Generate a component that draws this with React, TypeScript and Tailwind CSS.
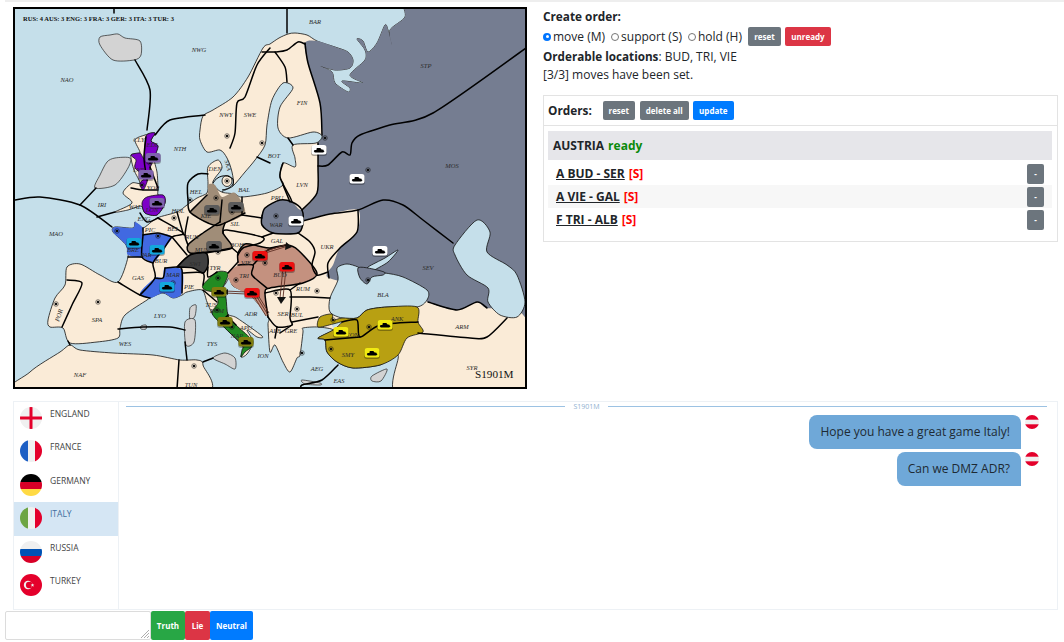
import React from "react";

const CREAM = "#faebd7";
const SEA = "#c5dfea";
const GRAY = "#757d91";
const ISLE = "#d3d3d3";
type P = number[][];

function smooth(p: P, closed: boolean) {
  const n = p.length;
  const at = (i: number) => (closed ? p[(i + n) % n] : p[Math.max(0, Math.min(n - 1, i))]);
  let d = `M${p[0][0]} ${p[0][1]}`;
  const last = closed ? n : n - 1;
  for (let i = 0; i < last; i++) {
    const a = at(i - 1), b = at(i), c = at(i + 1), e = at(i + 2);
    const k = 0.14;
    d += `C${(b[0] + (c[0] - a[0]) * k).toFixed(1)} ${(b[1] + (c[1] - a[1]) * k).toFixed(1)} ${(c[0] - (e[0] - b[0]) * k).toFixed(1)} ${(c[1] - (e[1] - b[1]) * k).toFixed(1)} ${c[0]} ${c[1]}`;
  }
  return closed ? d + "Z" : d;
}
const poly = (p: P) => smooth(p, true);
const line = (p: P) => smooth(p, false);

const land: P = [[203,116],[213,110],[233,97],[248,77],[263,48],[270,44],[279,38],[288,34],[295,33],[307,35],[317,41],[335,47],[348,52],[353,60],[350,68],[335,70],[320,66],[332,72],[335,83],[348,92],[350,88],[342,81],[363,83],[350,75],[365,60],[365,50],[357,39],[363,41],[368,52],[377,43],[385,25],[388,30],[392,45],[390,30],[405,17],[402,2],[402,-10],[545,-10],[545,400],[402,400],[398,355],[380,365],[353,368],[337,362],[327,352],[325,340],[318,338],[333,330],[318,327],[303,328],[303,332],[300,355],[297,358],[290,372],[283,362],[275,345],[270,352],[268,325],[268,317],[250,295],[233,286],[230,277],[226,283],[223,290],[227,313],[237,318],[262,336],[257,337],[247,330],[253,342],[247,354],[241,357],[243,347],[230,333],[220,323],[212,313],[207,302],[202,290],[187,292],[182,295],[173,298],[163,293],[150,298],[147,300],[125,315],[120,328],[118,338],[97,342],[70,343],[63,328],[50,327],[48,320],[55,298],[65,285],[67,267],[80,264],[100,275],[118,282],[128,257],[126,245],[113,232],[115,227],[133,228],[135,222],[143,228],[157,218],[177,212],[187,205],[197,198],[207,193],[208,183],[208,167],[218,160],[222,168],[215,178],[213,184],[222,192],[233,186],[232,172],[227,158],[220,150],[207,152],[200,140],[200,130]];
const baltic: P = [[222,192],[233,186],[245,172],[255,160],[265,145],[267,125],[272,100],[283,83],[293,88],[280,107],[278,128],[288,138],[313,132],[322,136],[316,143],[293,145],[295,158],[295,167],[283,163],[280,177],[283,185],[267,193],[242,197],[235,194]];
const russia: P = [[305,43],[317,41],[335,47],[348,52],[353,60],[350,68],[335,70],[320,66],[332,72],[335,83],[348,92],[350,88],[342,81],[363,83],[350,75],[365,60],[365,50],[357,39],[363,41],[368,52],[377,43],[385,25],[388,30],[392,45],[390,30],[405,17],[402,2],[402,-10],[545,-10],[545,308],[515,308],[487,308],[477,302],[457,310],[428,302],[400,285],[360,285],[329,278],[328,272],[333,265],[340,248],[357,232],[358,210],[330,214],[305,220],[303,223],[298,233],[273,233],[262,225],[262,215],[265,208],[280,200],[292,202],[302,210],[317,193],[318,167],[318,143],[322,135],[320,103],[308,63]];
const black: P = [[338,280],[337,268],[347,264],[358,267],[365,272],[368,267],[385,258],[398,250],[388,262],[372,272],[385,273],[403,277],[427,290],[427,300],[417,307],[387,307],[367,310],[357,318],[342,318],[330,312],[330,298]];
const crimea: P = [[358,268],[368,268],[384,272],[383,275],[372,277],[367,284],[360,278]];
const caspian: P = [[455,245],[477,220],[490,232],[487,252],[507,265],[517,275],[525,302],[517,317],[500,315],[488,302],[488,288],[467,275],[455,255]];
const turkey: P = [[318,327],[320,317],[332,314],[333,320],[342,318],[357,318],[367,310],[387,307],[417,307],[418,322],[423,332],[407,338],[398,355],[380,365],[353,368],[337,362],[327,352],[325,340],[318,338],[333,330],[342,322],[333,324]];
const africa: P = [[14,396],[30,372],[60,352],[70,345],[80,350],[113,353],[153,355],[180,360],[197,360],[203,365],[200,396]];
const uk: P = [[145,135],[155,133],[151,141],[158,146],[154,158],[157,172],[158,188],[158,195],[163,196],[165,203],[157,215],[145,213],[141,206],[128,210],[115,212],[132,203],[123,193],[132,183],[140,183],[134,170],[131,155],[140,153],[135,140]];
const purple: P[] = [[[146,136],[155,133],[151,141],[158,146],[154,158],[150,168],[147,182],[143,190],[140,183],[145,177],[135,168],[136,160],[131,155],[140,153],[144,158]],[[142,203],[147,197],[163,195],[165,203],[157,215],[145,213]]];
const isles: P[] = [
  [[100,37],[110,35],[118,34],[125,38],[140,41],[141,55],[134,60],[113,60],[100,45]],
  [[95,188],[100,175],[107,162],[115,158],[130,158],[128,168],[115,185]],
  [[190,308],[196,305],[195,316],[190,320]],
  [[185,322],[195,320],[194,342],[186,345]],
  [[213,358],[225,353],[235,358],[235,369],[225,364]],
  [[141,326],[146,325],[146,329],[141,329]],
  [[372,376],[387,369],[381,381],[372,381]],
  [[302,380],[320,383],[320,385],[305,384]],
];
const brownA: P[] = [
  [[190,212],[207,195],[208,185],[215,185],[222,197],[235,193],[245,213],[220,225],[208,223]],
  [[220,222],[203,233],[188,245],[190,253],[207,252],[232,248],[223,233],[225,223]],
];
const franceA: P[] = [
  [[115,227],[133,228],[135,222],[143,228],[143,235],[158,233],[172,237],[163,250],[153,263],[143,258],[128,255],[126,245],[113,232]],
  [[165,268],[182,270],[182,293],[173,298],[163,293],[150,298],[140,293],[155,278],[163,278]],
];
const swiss: P = [[177,267],[190,255],[206,253],[208,265],[203,273],[193,268]];
const italyA: P = [[203,285],[217,272],[228,273],[225,283],[223,288],[226,298],[228,315],[236,325],[250,338],[252,346],[245,352],[241,357],[242,350],[243,345],[230,333],[220,323],[212,313],[218,303],[216,295],[213,292],[205,290]];
const austria: P = [[238,262],[238,253],[245,244],[258,246],[270,248],[287,245],[298,250],[317,273],[303,283],[270,288],[265,293],[268,317],[252,297],[233,286],[228,273],[238,265]];

const borders: P[] = [
  [[114,7],[114,13]],[[287,8],[287,33]],[[135,60],[150,90],[147,130]],[[155,135],[170,120],[205,115]],
  [[270,48],[257,65],[245,97],[237,103],[235,133],[230,148]],[[262,52],[275,52],[287,50],[298,42],[305,44]],[[275,52],[285,67],[287,82]],
  [[257,157],[270,163]],[[293,145],[288,138]],[[305,43],[308,63],[320,103],[322,135]],[[318,143],[318,167],[317,193],[302,210]],
  [[526,48],[433,113],[390,125],[360,135],[352,143],[350,155],[342,152],[328,165],[318,166]],
  [[283,163],[280,177],[290,197],[292,202]],[[283,185],[290,202]],[[242,197],[242,215]],[[262,217],[265,208],[280,200],[292,202],[302,210],[303,223],[298,233],[273,233],[262,225],[262,215]],[[242,215],[262,218]],
  [[303,221],[330,214],[358,210],[383,200],[403,205],[423,220],[453,243]],
  [[358,210],[357,232],[340,248],[328,263],[329,278]],[[298,233],[310,242],[315,252],[312,265],[317,275],[328,272]],
  [[222,200],[220,222]],[[245,213],[220,225],[208,223],[190,212],[188,200],[188,183],[198,174],[208,174]],[[207,195],[190,212]],
  [[220,222],[203,233],[188,245],[190,253],[207,252],[232,248],[223,233],[225,223]],[[188,245],[185,235],[188,217]],
  [[223,233],[227,230],[262,237],[260,243],[243,248],[238,255]],[[232,248],[238,253]],[[262,237],[273,233]],
  [[158,218],[183,233],[172,237],[163,250],[153,263],[155,278],[140,295]],[[177,212],[183,233],[185,235]],[[143,228],[143,235],[142,257],[153,263]],[[143,235],[158,233],[172,237]],
  [[128,257],[142,257]],[[118,282],[140,295],[150,298]],[[165,268],[163,278],[155,278]],[[172,237],[187,255]],[[165,268],[177,267],[182,270],[182,293]],
  [[177,267],[190,255],[206,253],[208,265],[203,273],[193,268],[177,267]],[[208,267],[208,277],[217,272]],[[206,253],[232,248]],[[183,273],[203,273],[203,285]],
  [[238,262],[238,253],[245,244],[258,246],[270,248],[287,245],[298,250],[317,273],[303,283],[270,288],[265,293],[268,317]],[[238,262],[228,273]],
  [[238,265],[253,265],[252,275],[267,288]],[[253,265],[268,250],[287,245]],
  [[265,293],[290,290],[290,318],[292,325],[277,327],[268,317]],[[290,297],[310,297],[330,298]],[[292,322],[318,317]],[[277,327],[275,338]],[[292,325],[280,333]],[[290,290],[300,283]],
  [[203,290],[217,302]],[[225,318],[228,315]],[[228,317],[236,325]],
  [[67,280],[82,283],[72,305],[62,327]],[[179,360],[177,389]],[[70,345],[68,341]],[[118,329],[143,327],[170,327],[185,330]],[[185,342],[187,360]],[[203,362],[213,358]],
  [[96,188],[80,205]],[[97,217],[115,212]],[[15,200],[40,197],[80,205],[112,227]],[[140,213],[147,222],[158,218]],[[158,188],[150,167]],
  [[302,389],[302,385],[322,380],[338,365]],[[146,137],[144,158],[147,180]],[[131,188],[143,190],[158,190]],
  [[418,333],[470,338],[487,337],[507,318]],[[428,302],[457,310],[477,302],[487,308]],[[342,322],[357,320],[360,337],[380,325],[418,322]],[[325,340],[360,337]],
];

const centres: P = [[227,136],[262,143],[150,163],[142,185],[227,181],[216,198],[325,138],[368,170],[276,216],[317,291],[297,309],[276,293],[368,280],[333,320],[369,327],[331,349],[302,353],[56,304],[98,302],[194,366],[232,327],[217,310],[218,278],[236,280],[247,255],[265,263],[158,236],[117,231],[174,218],[190,200],[232,212],[218,252],[173,283]];

const labels: [string, number, number][] = [["NAO",67,82],["NWG",199,52],["BAR",315,24],["STP",426,68],["NWY",226,117],["SWE",250,117],["FIN",302,105],["BOT",274,158],["BAL",244,192],["NTH",180,151],["DEN",215,171],["HEL",196,194],["LVN",302,187],["PRU",277,200],["MOS",452,168],["WAR",276,227],["UKR",327,249],["SEV",428,270],["GAL",277,243],["SIL",235,226],["BOH",237,247],["MUN",202,252],["KIE",206,218],["BER",237,210],["RUH",192,239],["HOL",178,213],["BEL",173,231],["PIC",150,232],["ENG",144,221],["IRI",102,207],["WAL",135,209],["LON",152,212],["YOR",153,190],["LVP",139,172],["EDI",152,147],["CLY",139,142],["MAO",56,236],["BRE",133,252],["PAR",146,257],["BUR",161,263],["GAS",138,280],["MAR",173,277],["SWI",195,266],["TYR",215,270],["PIE",189,289],["TUS",211,307],["ROM",217,313],["APU",246,330],["VIE",246,265],["TRI",244,278],["BUD",280,277],["RUM",303,291],["SER",283,316],["BUL",297,317],["ALB",275,333],["GRE",291,333],["ADR",251,316],["ION",263,358],["AEG",317,371],["EAS",339,383],["LYO",160,318],["WES",125,346],["TYS",212,346],["SPA",97,322],["NAF",80,377],["TUN",191,387],["BLA",383,297],["ANK",397,321],["ARM",462,329],["CON",352,337],["SMY",348,357],["SYR",472,370],["NAP",237,338]];

const units: [number, number, string][] = [
  [153,158,"#7e62ad"],[146,175,"#7e62ad"],[157,203,"#7e62ad"],
  [134,243,"#13a7dc"],[157,250,"#13a7dc"],[167,287,"#13a7dc"],
  [212,210,"#5b5b5b"],[236,207,"#5b5b5b"],[214,246,"#5b5b5b"],
  [219,292,"#7f7d10"],[225,322,"#7f7d10"],[246,342,"#7f7d10"],
  [260,256,"#ee0f10"],[252,293,"#ee0f10"],[287,267,"#ee0f10"],
  [319,150,"#ffffff"],[357,179,"#ffffff"],[296,221,"#ffffff"],[380,251,"#ffffff"],
  [341,332,"#f1ea12"],[385,325,"#f1ea12"],[372,353,"#f1ea12"],
];

function Unit({ x, y, c }: { x: number; y: number; c: string }) {
  return (
    <g transform={`translate(${x} ${y})`}>
      <rect x={-8} y={-4.5} width={16} height={10.5} rx={3} fill="#000" opacity={0.3} />
      <rect x={-7.5} y={-5} width={15} height={9.5} rx={2.5} fill={c} />
      <path d="M-5.2 1.2L-4.4 0L-2.6 0L-2.2 -2L1.4 -2L2.2 -0.7L5 -0.7L2.2 0L4.2 0L5.5 1.2L4.2 2.6L-4.2 2.6Z" fill="#000" />
    </g>
  );
}

function MapSvg() {
  const coast = { stroke: "#111", strokeWidth: 0.8 };
  return (
    <svg viewBox="15 9 510 378" className="block h-full w-full">
      <rect x={13} y={7} width={514} height={382} fill={SEA} />
      <path d={poly(land)} fill={CREAM} {...coast} />
      <path d={poly(uk)} fill={CREAM} {...coast} />
      <path d={poly(africa)} fill={CREAM} {...coast} />
      <path d={poly(russia)} fill={GRAY} />
      <path d={poly(baltic)} fill={SEA} {...coast} />
      <path d={poly(black)} fill={SEA} {...coast} />
      <path d={poly(crimea)} fill={GRAY} {...coast} />
      <path d={poly(caspian)} fill={SEA} {...coast} />
      <path d="M331 322L342 318L344 322L333 328Z" fill={SEA} />
      <ellipse cx={227} cy={181} rx={5} ry={5.5} fill={CREAM} {...coast} />
      <path d="M213 183C217 176 226 173 233 179C235 185 230 189 222 190" fill="none" stroke="#000" strokeWidth={1} />
      {isles.map((p, i) => <path key={i} d={poly(p)} fill={ISLE} stroke="#222" strokeWidth={0.7} />)}
      {purple.map((p, i) => <path key={i} d={poly(p)} fill="#7d00c8" {...coast} />)}
      {brownA.map((p, i) => <path key={i} d={poly(p)} fill="#a08d78" />)}
      {franceA.map((p, i) => <path key={i} d={poly(p)} fill="#4169e1" />)}
      <path d={poly(italyA)} fill="#228b22" {...coast} />
      <path d={poly(swiss)} fill="#404040" />
      <path d={poly(austria)} fill="#c4917f" />
      <path d={poly(turkey)} fill="#b8a012" {...coast} />
      {borders.map((p, i) => <path key={i} d={line(p)} fill="none" stroke="#000" strokeWidth={1.5} strokeLinejoin="round" strokeLinecap="round" />)}
      <g fontFamily="'Liberation Serif', serif" fontStyle="italic" fontSize={6.5} fill="#2c2c2c" textAnchor="middle">
        {labels.map(([t, x, y]) => <text key={t} x={x} y={y}>{t}</text>)}
        <text transform="translate(61 316) rotate(-72)">POR</text>
        <text transform="translate(226 166) rotate(75)" fontSize={6}>SKA</text>
      </g>
      {centres.map(([x, y], i) => (
        <g key={i}>
          <circle cx={x} cy={y} r={2.3} fill="none" stroke="#111" strokeWidth={0.5} />
          <circle cx={x} cy={y} r={1.3} fill="#111" />
        </g>
      ))}
      <g stroke="#5f2f24" strokeWidth={0.9} fill="none">
        <path d="M286 268L283 298M283 268L280 298" />
        <path d="M262 254L288 246M262 252L288 244" />
        <path d="M252 293L266 316M254 292L268 315M256 292L269 313" />
        <path d="M225 291L246 292M225 293L246 294" />
      </g>
      <path d="M277 297L286 297L281 304Z" fill="#111" />
      <path d="M286 242L292 247L285 250Z" fill="#111" />
      <path d="M228 289L223 292L228 295Z" fill="#111" />
      {units.map(([x, y, c], i) => <Unit key={i} x={x} y={y} c={c} />)}
      <text x={23} y={21} fontFamily="'Liberation Serif', serif" fontWeight={700} fontSize={6.5} fill="#111">RUS: 4 AUS: 3 ENG: 3 FRA: 3 GER: 3 ITA: 3 TUR: 3</text>
      <text x={475} y={378} fontFamily="'Liberation Serif', serif" fontSize={11.2} fill="#111">S1901M</text>
    </svg>
  );
}

function Flag({ kind }: { kind: string }) {
  const g: Record<string, React.ReactNode> = {
    england: <><rect width={22} height={22} fill="#f0f0f0" /><rect x={9.5} width={3} height={22} fill="#e4002b" /><rect y={9.5} width={22} height={3} fill="#e4002b" /></>,
    france: <><rect width={8} height={22} fill="#1d5fc4" /><rect x={8} width={7} height={22} fill="#f0f0f0" /><rect x={15} width={7} height={22} fill="#e4002b" /></>,
    germany: <><rect width={22} height={8} fill="#000" /><rect y={8} width={22} height={7} fill="#d80027" /><rect y={15} width={22} height={7} fill="#ffda44" /></>,
    italy: <><rect width={8} height={22} fill="#6da544" /><rect x={8} width={7} height={22} fill="#f0f0f0" /><rect x={15} width={7} height={22} fill="#e4002b" /></>,
    russia: <><rect width={22} height={8} fill="#f0f0f0" /><rect y={8} width={22} height={7} fill="#0052b4" /><rect y={15} width={22} height={7} fill="#d80027" /></>,
    turkey: <><rect width={22} height={22} fill="#e4002b" /><circle cx={8} cy={11} r={4.2} fill="#f0f0f0" /><circle cx={9.2} cy={11} r={3.3} fill="#e4002b" /><path d="M12.5 9.3l.5 1.2 1.3.1-1 .8.3 1.3-1.1-.7-1.1.7.3-1.3-1-.8 1.3-.1z" fill="#f0f0f0" /></>,
  };
  return (
    <svg viewBox="0 0 22 22" className="h-[22px] w-[22px] shrink-0 rounded-full">
      {g[kind]}
    </svg>
  );
}

function AustriaFlag() {
  return (
    <svg viewBox="0 0 14 14" className="h-[14px] w-[14px] shrink-0 rounded-full">
      <rect width={14} height={14} fill="#f0f0f0" />
      <rect width={14} height={4.7} fill="#e4002b" />
      <rect y={9.3} width={14} height={4.7} fill="#e4002b" />
    </svg>
  );
}

function Radio({ on, label }: { on?: boolean; label: string }) {
  return (
    <span className="flex items-center">
      {on ? (
        <span className="flex h-2 w-2 items-center justify-center rounded-full bg-[#0075ff]"><span className="h-[3px] w-[3px] rounded-full bg-white" /></span>
      ) : (
        <span className="h-2 w-2 rounded-full border border-[#767676] bg-white" />
      )}
      <span className="ml-[2px]">{label}</span>
    </span>
  );
}

function Btn({ className, children }: { className: string; children: React.ReactNode }) {
  return <button className={`flex items-center justify-center rounded-[2px] text-[8px] leading-none font-bold text-white ${className}`}>{children}</button>;
}

const orders = [["A BUD - SER", ""], ["A VIE - GAL", "bg-[#f7f7f7]"], ["F TRI - ALB", ""]];
const people = [["england", "ENGLAND"], ["france", "FRANCE"], ["germany", "GERMANY"], ["italy", "ITALY"], ["russia", "RUSSIA"], ["turkey", "TURKEY"]];

export default function App() {
  return (
    <div className="relative h-[642px] w-[1064px] overflow-hidden bg-white font-['Open_Sans',sans-serif] text-[12px] text-[#212529]">
      <div className="ml-[5px] h-[2px] bg-[#eeeeee]" />
      <div className="flex pt-[5px] pl-[13px]">
        <div className="h-[382px] w-[514px] border-2 border-black bg-[#c5dfea]">
          <MapSvg />
        </div>
        <div className="ml-[16px] flex w-[515px] flex-col">
          <div className="text-[11.8px] leading-[19px] font-bold">Create order:</div>
          <div className="mt-px flex h-[19px] items-center gap-[6px] leading-[19px]">
            <Radio on label="move (M)" />
            <Radio label="support (S)" />
            <Radio label="hold (H)" />
            <Btn className="h-[19px] w-[33px] bg-[#6c757d]">reset</Btn>
            <Btn className="-ml-[2px] h-[19px] w-[46px] bg-[#dc3545]">unready</Btn>
          </div>
          <div className="mt-px leading-[19px]"><b className="text-[11.7px]">Orderable locations</b>: BUD, TRI, VIE</div>
          <div className="-mt-px leading-[19px]">[3/3] moves have been set.</div>
          <div className="mt-[11px] h-[147px] border border-[#e3e3e3]">
            <div className="flex h-[30px] items-center border-b border-[#e3e3e3] pl-[4px]">
              <span className="text-[11.8px] font-bold">Orders:</span>
              <Btn className="ml-[11px] h-[19px] w-[32px] bg-[#6c757d]">reset</Btn>
              <Btn className="ml-[5px] h-[19px] w-[49px] bg-[#6c757d]">delete all</Btn>
              <Btn className="ml-[4px] h-[19px] w-[41px] bg-[#007bff]">update</Btn>
            </div>
            <div className="mx-[4px] mt-[5px] mb-[2px] flex h-[29px] w-[504px] items-center bg-[#e6e6ea] pl-[5px] text-[12px] font-bold">
              AUSTRIA<span className="ml-[4px] text-[#0a8a0a]">ready</span>
            </div>
            {orders.map(([o, bg]) => (
              <div key={o} className={`mx-[4px] flex h-[23px] w-[504px] items-center justify-between pt-px pr-[8px] pl-[8px] text-[12px] font-bold ${bg}`}>
                <span><span className="underline">{o}</span><span className="ml-[4px] text-[#ff0000]">[S]</span></span>
                <Btn className="h-[20px] w-[17px] bg-[#6c757d]">-</Btn>
              </div>
            ))}
          </div>
        </div>
      </div>
      <div className="mt-[12px] ml-[13px] flex h-[209px] w-[1045px] border border-[#edf1f5]">
        <div className="w-[105px] border-r border-[#edf1f5]">
          {people.map(([k, n]) => (
            <div key={k} className={`flex h-[33.4px] gap-[8px] pl-[6px] ${k === "italy" ? "bg-[#d5e6f4] text-[#3f6f9f]" : "text-[#444444]"}`}>
              <div className="pt-[5px]"><Flag kind={k} /></div>
              <span className="pt-[6px] text-[8.5px] leading-[11px]">{n}</span>
            </div>
          ))}
        </div>
        <div className="flex min-w-0 flex-1 flex-col pr-[10px] pl-[7px]">
          <div className="flex items-center gap-[8px]">
            <div className="h-px flex-1 bg-[#9cc2e3]" />
            <span className="text-[7px] leading-[9px] text-[#8fb1d0]">S1901M</span>
            <div className="h-px flex-1 bg-[#9cc2e3]" />
          </div>
          <div className="mt-[4px] flex flex-col items-end gap-[3px]">
            {["Hope you have a great game Italy!", "Can we DMZ ADR?"].map((m) => (
              <div key={m} className="flex items-start gap-[4px] pr-[8px]">
                <div className="flex h-[34px] items-center rounded-[8px] rounded-br-none bg-[#6fa8d8] px-[11px] text-[#1e2a33]">{m}</div>
                <AustriaFlag />
              </div>
            ))}
          </div>
        </div>
      </div>
      <div className="mt-px ml-[5px] flex h-[29px]">
        <div className="relative h-[29px] w-[146px] rounded-[2px] border border-[#dcdcdc] bg-white">
          <svg viewBox="0 0 8 8" className="absolute right-[1px] bottom-[1px] h-[8px] w-[8px]"><path d="M0 8L8 0M3 8L8 3M6 8L8 6" stroke="#999" strokeWidth={0.8} /></svg>
        </div>
        <Btn className="h-[29px] w-[34px] bg-[#28a745]">Truth</Btn>
        <Btn className="h-[29px] w-[25px] bg-[#dc3545]">Lie</Btn>
        <Btn className="h-[29px] w-[43px] bg-[#007bff]">Neutral</Btn>
      </div>
    </div>
  );
}
